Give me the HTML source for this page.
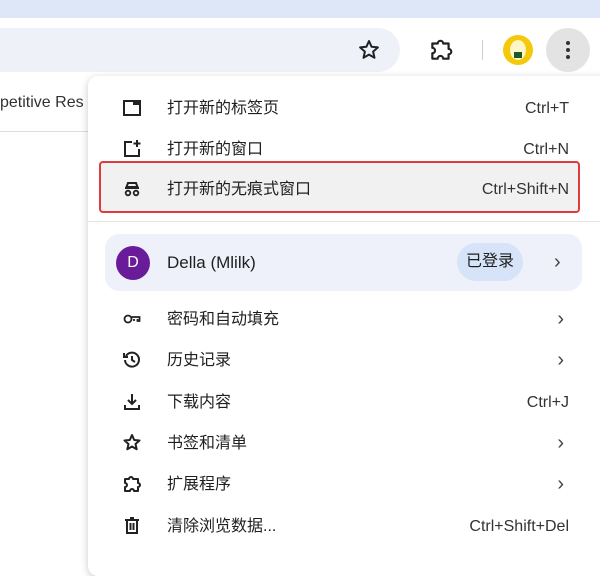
<!DOCTYPE html>
<html><head><meta charset="utf-8"><style>
*{margin:0;padding:0;box-sizing:border-box}
body{width:600px;height:557px;overflow:hidden;background:#fff;position:relative;font-family:"Liberation Sans","Noto Sans CJK SC",sans-serif;color:#1f1f1f}
.top{position:absolute;left:0;top:0;width:600px;height:18px;background:#dde7f8}
.bar{position:absolute;left:0;top:18px;width:600px;height:62px;background:#fff}
.addr{position:absolute;left:-20px;top:28px;width:420px;height:44px;border-radius:22px;background:#eef1f8}
.menu{position:absolute;left:88px;top:76px;width:530px;height:500px;background:#fff;border-radius:10px;box-shadow:0 2px 8px rgba(0,0,0,.22)}
.row{position:absolute;left:88px;width:500px;height:40px;font-size:16px;line-height:40px}
.row .ic{position:absolute;left:34px;top:9px;width:20px;height:20px}
.row .t{position:absolute;left:79px;top:0;line-height:40px}
.row .k{position:absolute;right:19px;top:0;line-height:40px;font-size:16px;color:#333}
.row .ch{position:absolute;right:24px;top:0;line-height:38px;font-size:20px;color:#444}
svg{display:block}
</style></head><body>
<div class="top"></div>
<div class="bar"></div>
<div class="addr"></div>
<svg style="position:absolute;left:357px;top:38px" width="24" height="24" viewBox="0 0 24 24"><path d="M12 3l2.6 5.8 6.3.6-4.8 4.2 1.4 6.2L12 16.6l-5.5 3.2 1.4-6.2-4.8-4.2 6.3-.6z" fill="none" stroke="#222" stroke-width="2" stroke-linejoin="round"/></svg>
<svg style="position:absolute;left:428px;top:37px" width="26" height="26" viewBox="0 0 24 24"><path d="M4 6h5a2.5 2.5 0 0 1 5 0h5v5a2.5 2.5 0 0 1 0 5v4H14a2.5 2.5 0 0 0-5 0H4v-5a2.5 2.5 0 0 0 0-5z" fill="none" stroke="#222" stroke-width="2" stroke-linejoin="round"/></svg>
<div style="position:absolute;left:482px;top:40px;width:1px;height:20px;background:#ccd"></div>
<div style="position:absolute;left:503px;top:35px;width:30px;height:30px;border-radius:50%;background:#f5c90a"></div>
<div style="position:absolute;left:510px;top:40px;width:16px;height:20px;border-radius:50%;background:#fff6c8"></div>
<div style="position:absolute;left:514px;top:52px;width:8px;height:6px;background:#1a5a2a"></div>
<div style="position:absolute;left:546px;top:28px;width:44px;height:44px;border-radius:50%;background:#e3e3e3"></div>
<div style="position:absolute;left:566px;top:41px;width:4px;height:4px;border-radius:50%;background:#333;box-shadow:0 7px 0 #333,0 14px 0 #333"></div>
<div style="position:absolute;left:0;top:94px;font-size:16px;color:#333">petitive Res</div>
<div style="position:absolute;left:0;top:131px;width:88px;height:1px;background:#ddd"></div>
<div class="menu"></div>

<div class="row" style="top:89px"><svg class="ic" viewBox="0 0 20 20"><rect x="2" y="3" width="16" height="14" fill="none" stroke="#222" stroke-width="2"/><rect x="11" y="3" width="7" height="4" fill="#222"/></svg><span class="t">打开新的标签页</span><span class="k">Ctrl+T</span></div>
<div class="row" style="top:130px"><svg class="ic" viewBox="0 0 20 20"><path d="M10 3H3v14h14v-7" fill="none" stroke="#222" stroke-width="2"/><path d="M15 1v7M11.5 4.5h7" stroke="#222" stroke-width="2"/></svg><span class="t">打开新的窗口</span><span class="k">Ctrl+N</span></div>
<div style="position:absolute;left:99px;top:161px;width:481px;height:52px;border:2px solid #e03a3a;border-radius:4px;background:#f1f1f1"></div>
<div class="row" style="top:170px"><svg class="ic" viewBox="0 0 20 20"><path d="M6 4h8l1.5 4h-11zM3 9h14" stroke="#222" stroke-width="2" fill="none"/><circle cx="6" cy="14" r="2.3" fill="none" stroke="#222" stroke-width="1.8"/><circle cx="14" cy="14" r="2.3" fill="none" stroke="#222" stroke-width="1.8"/></svg><span class="t">打开新的无痕式窗口</span><span class="k">Ctrl+Shift+N</span></div>
<div style="position:absolute;left:88px;top:221px;width:530px;height:1px;background:#e4e4e4"></div>
<div style="position:absolute;left:105px;top:234px;width:477px;height:57px;border-radius:14px;background:#eef1f9"></div>
<div style="position:absolute;left:116px;top:246px;width:34px;height:34px;border-radius:50%;background:#6a1b9a;color:#fff;font-size:16px;text-align:center;line-height:34px">D</div>
<div style="position:absolute;left:167px;top:244px;font-size:17px;line-height:38px">Della (Mlilk)</div>
<div style="position:absolute;left:457px;top:243px;width:66px;height:38px;border-radius:19px;background:#d6e3f8;font-size:16px;text-align:center;line-height:38px">已登录</div>
<div style="position:absolute;left:554px;top:244px;font-size:20px;line-height:36px;color:#444">›</div>

<div class="row" style="top:300px"><svg class="ic" viewBox="0 0 20 20"><circle cx="6" cy="10" r="3.5" fill="none" stroke="#222" stroke-width="1.8"/><path d="M9.5 8h8v4h-2v-2M12 10v2" fill="none" stroke="#222" stroke-width="1.8"/></svg><span class="t">密码和自动填充</span><span class="ch">›</span></div>
<div class="row" style="top:341px"><svg class="ic" viewBox="0 0 20 20"><path d="M4 6a7 7 0 1 1-1 4" fill="none" stroke="#222" stroke-width="2"/><path d="M2 3v4h4" fill="none" stroke="#222" stroke-width="2"/><path d="M10 6v4l3 2" fill="none" stroke="#222" stroke-width="2"/></svg><span class="t">历史记录</span><span class="ch">›</span></div>
<div class="row" style="top:383px"><svg class="ic" viewBox="0 0 20 20"><path d="M10 2v10M6 8l4 4 4-4M3 13v4h14v-4" fill="none" stroke="#222" stroke-width="2"/></svg><span class="t">下载内容</span><span class="k">Ctrl+J</span></div>
<div class="row" style="top:424px"><svg class="ic" viewBox="0 0 20 20"><path d="M10 2l2.2 5 5.3.5-4 3.5 1.2 5.2L10 13.5l-4.7 2.7 1.2-5.2-4-3.5 5.3-.5z" fill="none" stroke="#222" stroke-width="2" stroke-linejoin="round"/></svg><span class="t">书签和清单</span><span class="ch">›</span></div>
<div class="row" style="top:465px"><svg class="ic" viewBox="0 0 20 20"><path d="M3 5h4a2 2 0 0 1 4 0h5v4a2 2 0 0 1 0 4v4h-4a2 2 0 0 0-4 0H3v-4a2 2 0 0 0 0-4z" fill="none" stroke="#222" stroke-width="2" stroke-linejoin="round"/></svg><span class="t">扩展程序</span><span class="ch">›</span></div>
<div class="row" style="top:507px"><svg class="ic" viewBox="0 0 20 20"><path d="M3 4h14M8 2h4M5 4v13h10V4M8.5 7v7M11.5 7v7" fill="none" stroke="#222" stroke-width="2"/></svg><span class="t">清除浏览数据...</span><span class="k">Ctrl+Shift+Del</span></div>
</body></html>
